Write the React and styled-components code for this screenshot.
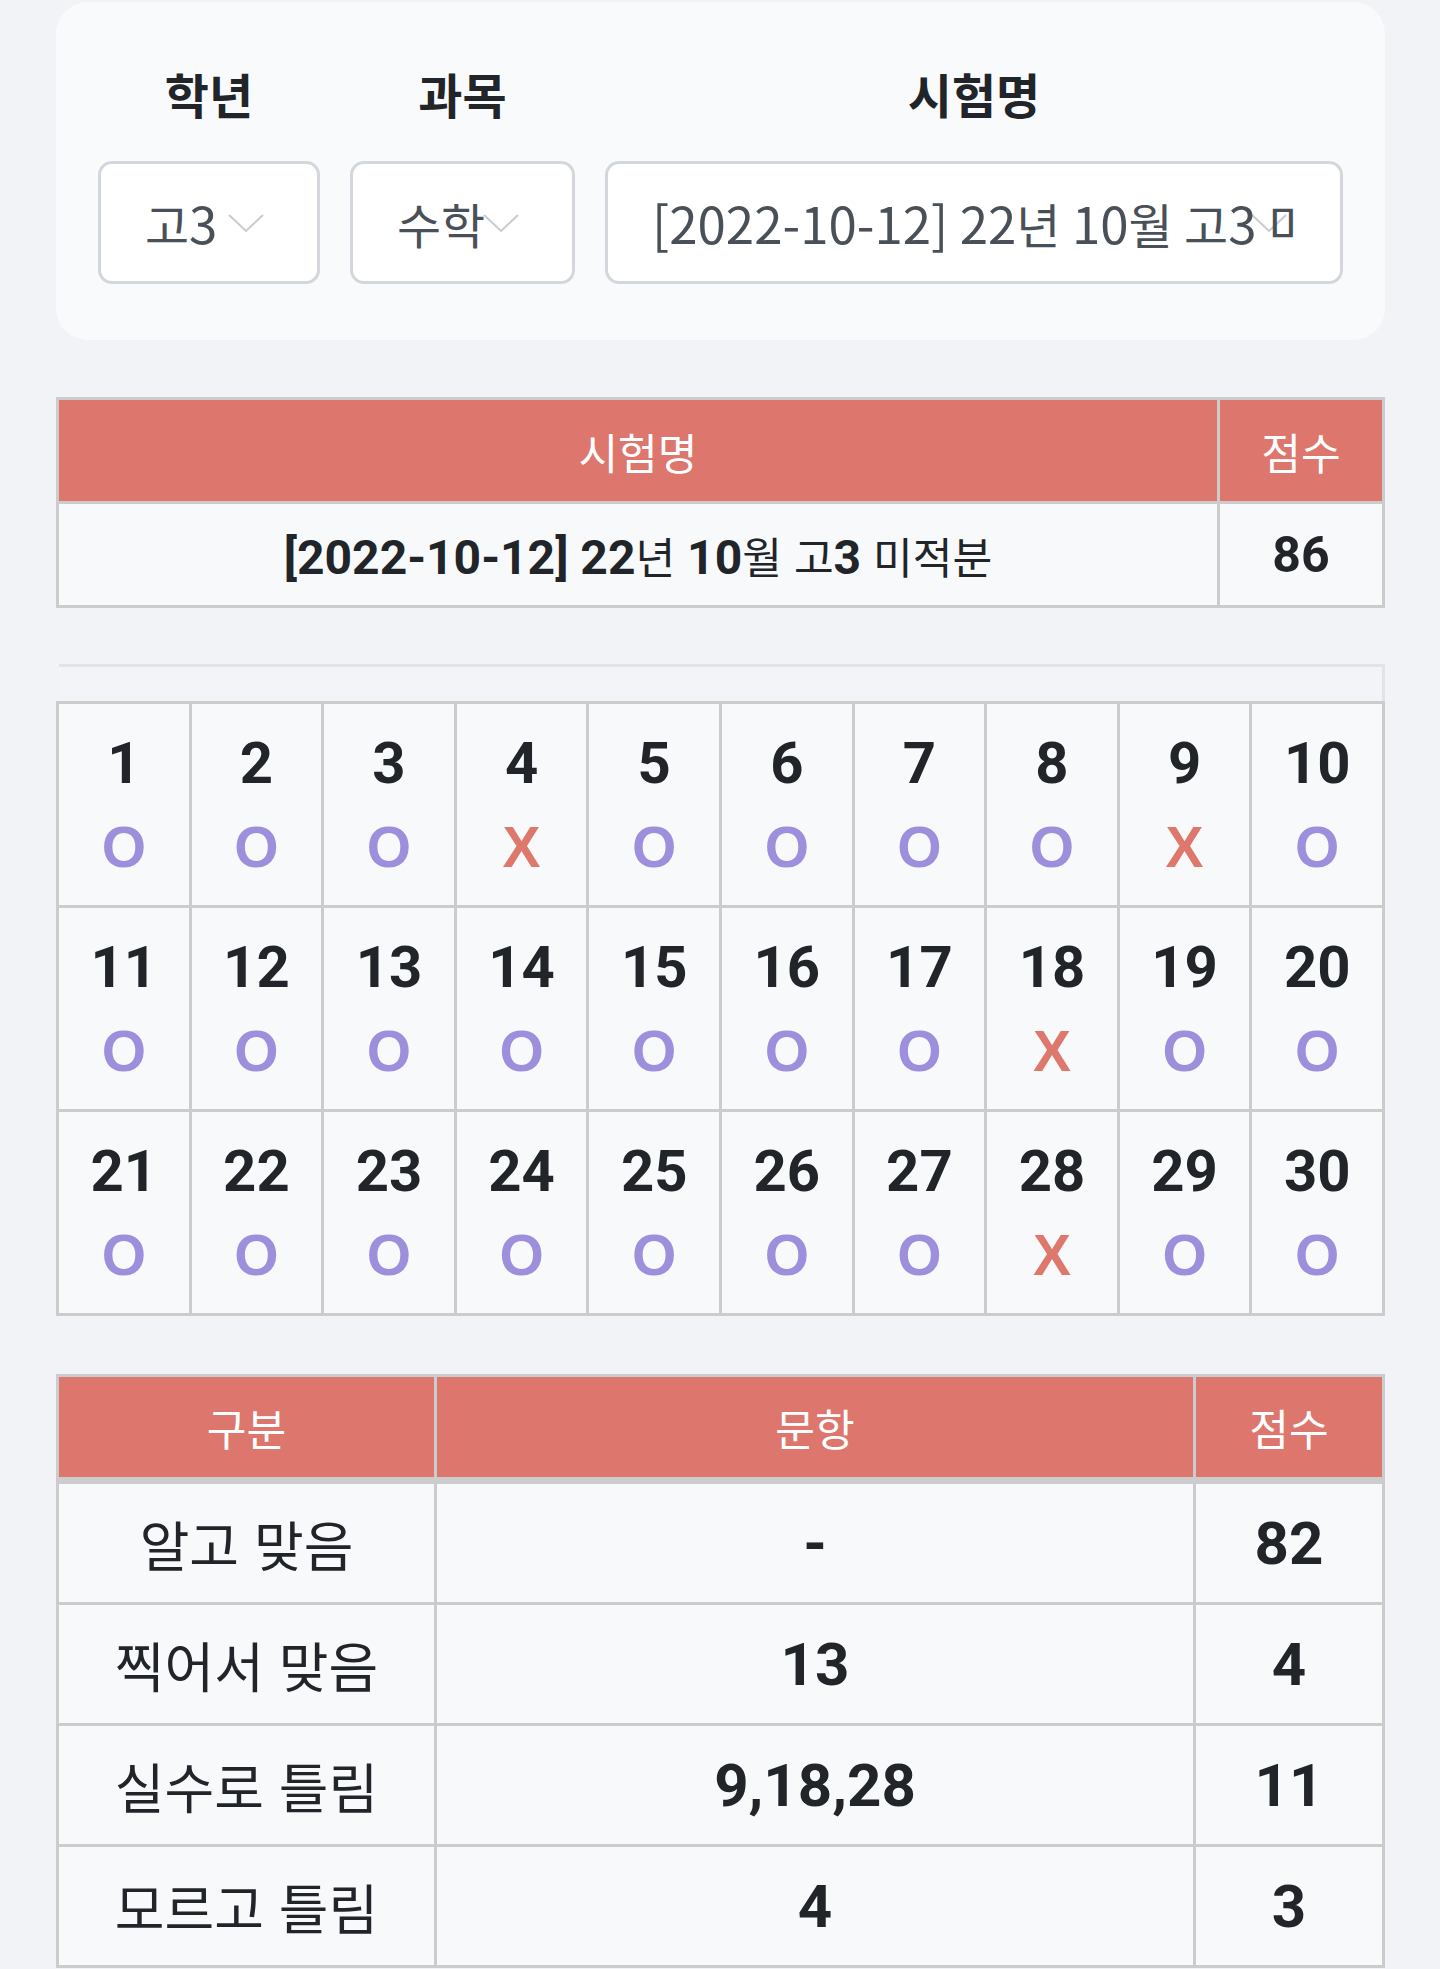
import React from 'react';
import styled, { createGlobalStyle } from 'styled-components';

const GlobalStyle = createGlobalStyle`
  *, *::before, *::after { box-sizing: border-box; }
  html, body { margin: 0; padding: 0; background: #f2f3f6; }
  body { font-family: "Noto Sans CJK KR", "Noto Sans", sans-serif; color: #212529; }
`;

const Page = styled.main`
  padding: 2px 55px 2px 56px;
  display: flex;
  flex-direction: column;
`;

const FilterCard = styled.section`
  background: #f9fafb;
  border-radius: 32px;
  padding: 58px 42px 56px;
  display: grid;
  grid-template-columns: 222px 225px 1fr;
  column-gap: 30px;
  row-gap: 34px;
`;

const FieldLabel = styled.div`
  text-align: center;
  font-family: "Noto Sans CJK KR", sans-serif;
  font-weight: 700;
  font-size: 48px;
  line-height: 67px;
  color: #212529;
`;

const SelectBox = styled.div`
  position: relative;
  height: 123px;
  border: 3px solid #d3d7dd;
  border-radius: 14px;
  background: #ffffff;
  padding: 0 41px 0 44px;
  display: flex;
  align-items: center;
  overflow: hidden;
`;

const SelectValue = styled.span`
  position: relative;
  z-index: 1;
  min-width: 0;
  white-space: nowrap;
  overflow: hidden;
  font-family: "Noto Sans CJK KR", sans-serif;
  font-size: 51px;
  font-weight: 400;
  line-height: 1.5;
  color: #495057;
`;

const SelectKo = styled.span`
  font-size: 0.94em;
`;

const Chevron = styled.svg`
  position: absolute;
  right: 52px;
  top: 50%;
  transform: translateY(-50%);
  width: 38px;
  height: 22px;
`;

const Section = styled.div`
  margin-top: ${p => p.$mt}px;
`;

const DataGrid = styled.div`
  display: grid;
  grid-template-columns: ${p => p.$cols};
  gap: 3px;
  background: #cccccc;
  border: 3px solid #cccccc;
  font-family: Roboto, "Noto Sans CJK KR", sans-serif;
`;

const HeadCell = styled.div`
  background: #dd766d;
  color: #ffffff;
  height: ${p => p.$h}px;
  display: flex;
  align-items: center;
  justify-content: center;
  font-size: 48px;
  font-weight: 400;
  border-bottom: ${p => p.$divider || 0}px solid #cccccc;
`;

const BodyCell = styled.div`
  background: #f8f9fb;
  color: #212529;
  height: ${p => p.$h}px;
  display: flex;
  align-items: center;
  justify-content: center;
  font-size: ${p => p.$size}px;
  font-weight: 700;
  white-space: nowrap;
`;

const Ko = styled.span`
  font-family: "Noto Sans CJK KR", sans-serif;
  font-weight: 400;
  font-size: 0.9em;
`;

const GridCaption = styled.div`
  margin-left: 3px;
  height: 37px;
  border-top: 3px solid #e1e3e7;
  border-right: 3px solid #e1e3e7;
  background: #f3f4f7;
`;

const AnswerCell = styled.div`
  background: #f8f9fb;
  height: 201px;
  display: flex;
  flex-direction: column;
  align-items: center;
  justify-content: center;
`;

const QNum = styled.div`
  font-family: Roboto, sans-serif;
  font-size: 58px;
  font-weight: 700;
  line-height: 84px;
  color: #212529;
`;

const Mark = styled.div`
  font-family: "Liberation Sans", Arial, sans-serif;
  font-size: 57px;
  font-weight: 700;
  line-height: 84px;
  color: ${p => (p.$wrong ? '#de786d' : '#9d8fdb')};
`;

const HANGUL = /([\u3131-\uD79D]+)/;

const splitKo = (text, Wrap) =>
  text.split(HANGUL).map((part, i) =>
    /[\u3131-\uD79D]/.test(part) ? <Wrap key={i}>{part}</Wrap> : <React.Fragment key={i}>{part}</React.Fragment>
  );

const mixed = text => <span>{splitKo(text, Ko)}</span>;

const ChevronIcon = () => (
  <Chevron viewBox="0 0 38 22" fill="none">
    <polyline points="2,3 19,19 36,3" stroke="#c9cbce" strokeWidth="2" />
  </Chevron>
);

const filters = [
  { label: '학년', value: '고3' },
  { label: '과목', value: '수학' },
  { label: '시험명', value: '[2022-10-12] 22년 10월 고3 미적분' },
];

const wrong = new Set([4, 9, 18, 28]);
const questions = Array.from({ length: 30 }, (_, i) => i + 1);

const summary = [
  ['알고 맞음', '-', '82'],
  ['찍어서 맞음', '13', '4'],
  ['실수로 틀림', '9,18,28', '11'],
  ['모르고 틀림', '4', '3'],
];

export default function App() {
  return (
    <>
      <GlobalStyle />
      <Page>
        <FilterCard>
          {filters.map(f => (
            <FieldLabel key={f.label}>{f.label}</FieldLabel>
          ))}
          {filters.map(f => (
            <SelectBox key={f.label}>
              <SelectValue>{splitKo(f.value, SelectKo)}</SelectValue>
              <ChevronIcon />
            </SelectBox>
          ))}
        </FilterCard>

        <Section $mt={57}>
          <DataGrid $cols="1158px 162px">
            <HeadCell $h={101}>{mixed('시험명')}</HeadCell>
            <HeadCell $h={101}>{mixed('점수')}</HeadCell>
            <BodyCell $h={101} $size={48}>{mixed('[2022-10-12] 22년 10월 고3 미적분')}</BodyCell>
            <BodyCell $h={101} $size={50}>86</BodyCell>
          </DataGrid>
        </Section>

        <Section $mt={56}>
          <GridCaption />
          <DataGrid $cols="repeat(10, 1fr)">
            {questions.map(q => (
              <AnswerCell key={q}>
                <QNum>{q}</QNum>
                <Mark $wrong={wrong.has(q)}>{wrong.has(q) ? 'X' : 'O'}</Mark>
              </AnswerCell>
            ))}
          </DataGrid>
        </Section>

        <Section $mt={58}>
          <DataGrid $cols="375px 756px 1fr">
            <HeadCell $h={104} $divider={4}>{mixed('구분')}</HeadCell>
            <HeadCell $h={104} $divider={4}>{mixed('문항')}</HeadCell>
            <HeadCell $h={104} $divider={4}>{mixed('점수')}</HeadCell>
            {summary.map(row =>
              row.map((c, i) => (
                <BodyCell key={row[0] + i} $h={118} $size={60}>
                  {mixed(c)}
                </BodyCell>
              ))
            )}
          </DataGrid>
        </Section>
      </Page>
    </>
  );
}
